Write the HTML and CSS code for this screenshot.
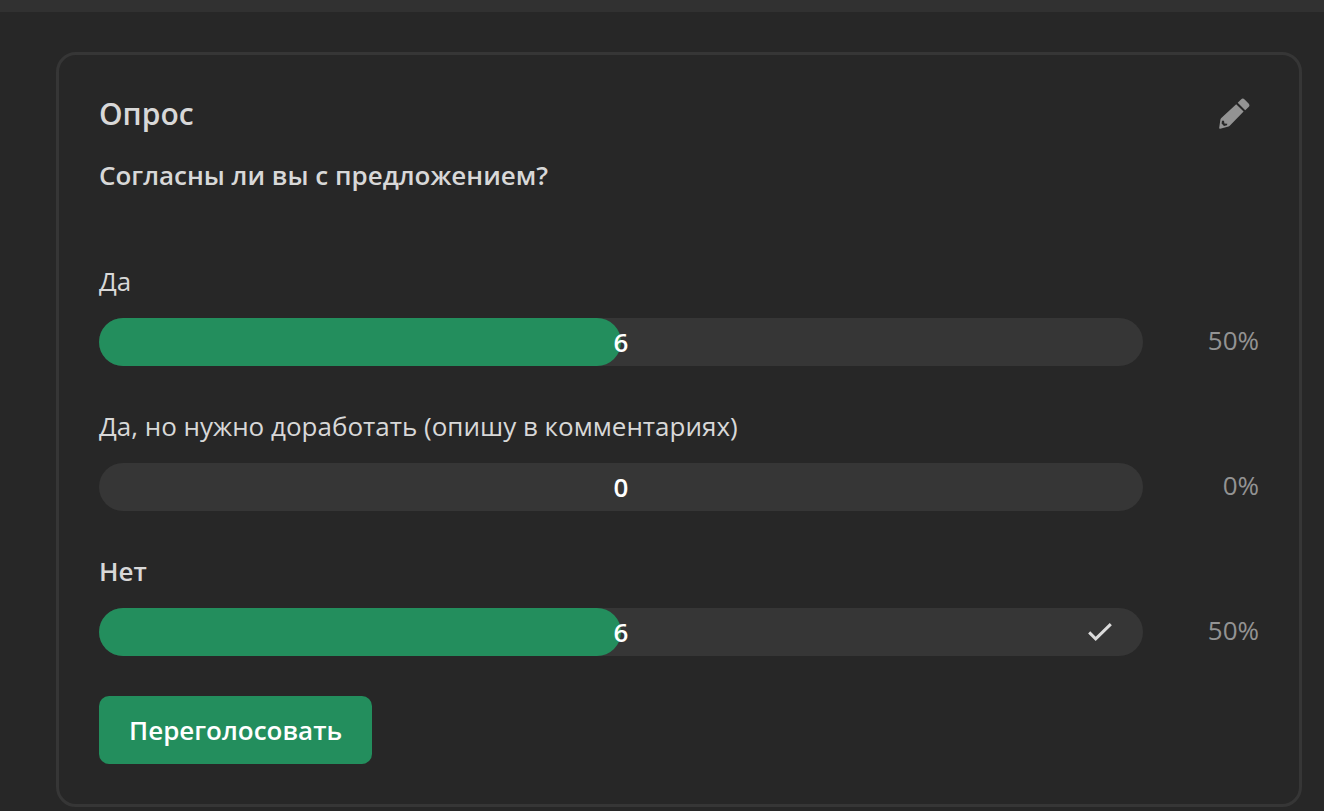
FILE: index.html
```html
<!DOCTYPE html>
<html lang="ru">
<head>
<meta charset="utf-8">
<meta name="viewport" content="width=device-width, initial-scale=1">
<title>Опрос</title>
<link rel="stylesheet" href="styles.css">
</head>
<body>
<div class="topbar"></div>
<main class="page">
  <section class="poll">
    <header class="poll-header">
      <h1 class="poll-title">Опрос</h1>
      <button class="edit" type="button" aria-label="Редактировать">
        <svg class="edit-icon" viewBox="0 0 31 32" aria-hidden="true"><path fill-rule="evenodd" d="M17.200 6.200L24.600 13.600L11 27.600Q10.500 28.200 9.600 28.500L1.200 30.800Q0 31 .2 29.800L1.400 21.400Q1.600 20.600 2.300 20ZM3 22.800L2.600 25.600L5 28L8 27.200L8.300 25.800L5.400 25.400L5 22.700ZM18.700 4.700L22 1.400Q23.800 -.4 25.600 1.400L29.600 5.400Q31.300 7.200 29.600 9L26.200 12.300Z"/></svg>
      </button>
    </header>
    <h2 class="question">Согласны ли вы с предложением?</h2>
    <ul class="options">
      <li class="option">
        <span class="label">Да</span>
        <div class="result">
          <div class="bar"><div class="fill" style="width:50%"></div><span class="count">6</span></div>
          <span class="percent">50%</span>
        </div>
      </li>
      <li class="option">
        <span class="label">Да, но нужно доработать (опишу в комментариях)</span>
        <div class="result">
          <div class="bar"><span class="count">0</span></div>
          <span class="percent">0%</span>
        </div>
      </li>
      <li class="option">
        <span class="label label-chosen">Нет</span>
        <div class="result">
          <div class="bar"><div class="fill" style="width:50%"></div><span class="count">6</span>
            <svg class="check" viewBox="0 0 24 18" aria-hidden="true"><path d="M1.200 9.400L7.700 15.800L22.800 1.200"/></svg>
          </div>
          <span class="percent">50%</span>
        </div>
      </li>
    </ul>
    <button class="revote" type="button">Переголосовать</button>
  </section>
</main>
</body>
</html>
```
FILE: styles.css
```css
* { box-sizing: border-box; }

body {
  margin: 0;
  background: #272727;
  color: #d8d8d8;
  font: 26px/36px "Open Sans", sans-serif;
}

.topbar {
  height: 12px;
  background: #313131;
}

.page {
  padding: 40px 22px 4px 56px;
}

.poll {
  padding: 37px 40px 40px;
  border: 3px solid #363636;
  border-radius: 20px;
}

.poll-header {
  display: flex;
  align-items: center;
  justify-content: space-between;
  height: 44px;
}

.poll-title {
  margin: 0;
  font-size: 30px;
  line-height: 44px;
  font-weight: 600;
}

.edit {
  display: flex;
  margin-right: 9px;
  padding: 0;
  border: 0;
  background: none;
  color: #939393;
  cursor: pointer;
}

.edit-icon {
  width: 31px;
  height: 32px;
  fill: currentColor;
}

.question {
  margin: 21px 0 70px;
  font-size: 26px;
  line-height: 36px;
  font-weight: 600;
}

.options {
  display: flex;
  flex-direction: column;
  gap: 42px;
  margin: 0 0 40px;
  padding: 0;
  list-style: none;
}

.label {
  display: block;
  margin-bottom: 19px;
}

.label-chosen {
  font-weight: 600;
}

.result {
  display: flex;
  align-items: center;
}

.bar {
  position: relative;
  display: flex;
  flex: 1;
  align-items: center;
  justify-content: center;
  height: 48px;
  border-radius: 24px;
  background: #363636;
}

.fill {
  position: absolute;
  inset: 0 auto 0 0;
  border-radius: 24px;
  background: #238e5d;
}

.count {
  position: relative;
  color: #fff;
  font-weight: 600;
}

.check {
  position: absolute;
  right: 31px;
  width: 24px;
  height: 18px;
  fill: none;
  stroke: #dcdcdc;
  stroke-width: 3;
}

.percent {
  width: 116px;
  padding-bottom: 4px;
  color: #939393;
  text-align: right;
}

.revote {
  display: block;
  padding: 16px 30px;
  border: 0;
  border-radius: 10px;
  background: #238e5d;
  color: #fff;
  font: 600 26px/36px "Open Sans", sans-serif;
  cursor: pointer;
}
```
